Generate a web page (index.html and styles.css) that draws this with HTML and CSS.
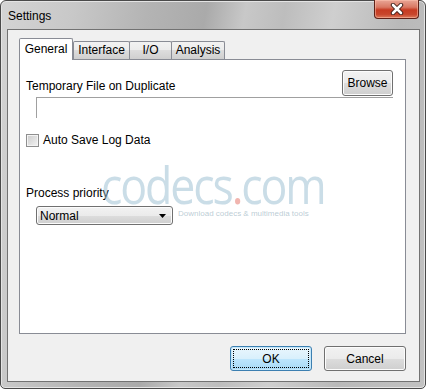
FILE: index.html
```html
<!DOCTYPE html>
<html>
<head>
<meta charset="utf-8">
<link rel="stylesheet" href="styles.css">
</head>
<body>
<div class="window">
  <div class="titlebar">
    <span class="title">Settings</span>
    <div class="close">
      <svg width="18" height="12" viewBox="0 0 18 12">
        <path d="M5 2 L13 10 M13 2 L5 10" stroke="#3a1a14" stroke-width="4.4" stroke-linecap="round" fill="none"/>
        <path d="M5 2 L13 10 M13 2 L5 10" stroke="#ffffff" stroke-width="2.6" stroke-linecap="round" fill="none"/>
      </svg>
    </div>
  </div>
  <div class="client">
    <div class="tabstrip">
      <div class="tab active w-general">General</div>
      <div class="tab w-interface">Interface</div>
      <div class="tab w-io">I/O</div>
      <div class="tab w-analysis">Analysis</div>
    </div>
    <div class="panel">
      <div class="row-file">
        <span class="label">Temporary File on Duplicate</span>
        <button class="btn browse">Browse</button>
      </div>
      <div class="edit"></div>
      <label class="check-row">
        <span class="checkbox"></span>
        <span class="label">Auto Save Log Data</span>
      </label>
      <div class="label priority-label">Process priority</div>
      <div class="combo">
        <span>Normal</span>
        <svg class="arrow" width="7" height="4" viewBox="0 0 7 4"><path d="M0 0 H7 L3.5 4 Z" fill="#000"/></svg>
      </div>
      <div class="watermark">
        <div class="wm-big">codecs<span class="wm-dot">.</span>com</div>
        <div class="wm-small">Download codecs &amp; multimedia tools</div>
      </div>
    </div>
    <div class="buttons">
      <button class="btn ok"><span class="focus">OK</span></button>
      <button class="btn cancel">Cancel</button>
    </div>
  </div>
</div>
</body>
</html>
```
FILE: styles.css
```css
html, body {
  margin: 0;
  padding: 0;
  background: #ffffff;
}
.window {
  width: 426px;
  height: 389px;
  box-sizing: border-box;
  border: 1px solid #4a4a4a;
  border-radius: 6px 6px 5px 5px;
  background: linear-gradient(100deg, #d4d4d4 0%, #c8c8c8 15%, #b4b4b4 30%, #aaaaaa 42%, #c8c8c8 50%, #bdbdbd 58%, #cfcfcf 68%, #b9b9b9 82%, #c2c2c2 100%);
  box-shadow: inset 0 0 0 1px #e4e4e4;
  padding: 0 5px 6px 6px;
  display: flex;
  flex-direction: column;
  font-family: "Liberation Sans", Arial, sans-serif;
  font-size: 12px;
  color: #000;
}
.titlebar {
  height: 28px;
  display: flex;
  justify-content: space-between;
  align-items: flex-start;
  position: relative;
}
.title {
  font-size: 12px;
  margin-left: 1px;
  margin-top: 8px;
  color: #000;
}
.close {
  width: 45px;
  height: 19px;
  margin-right: 1px;
  margin-top: -1px;
  box-sizing: border-box;
  border: 1px solid #5e2118;
  border-top: none;
  border-radius: 0 0 4px 4px;
  background: linear-gradient(#e9a696 0%, #d97863 40%, #c63b22 55%, #c8462c 80%, #dc7a5c 100%);
  box-shadow: inset 0 0 0 1px rgba(255, 200, 180, 0.5);
  display: flex;
  align-items: center;
  justify-content: center;
}
.client {
  flex: 1;
  border: 1px solid #727272;
  background: #f0f0f0;
  padding: 8px 13px 10px 11px;
  display: flex;
  flex-direction: column;
}
.tabstrip {
  display: flex;
  align-items: flex-end;
  height: 21px;
  position: relative;
  z-index: 2;
}
.tab {
  box-sizing: border-box;
  height: 18px;
  border: 1px solid #898c95;
  border-bottom: none;
  background: linear-gradient(#f2f2f2 0%, #ebebeb 50%, #dddddd 50%, #cfcfcf 100%);
  text-align: center;
  line-height: 17px;
  margin-left: -1px;
  border-radius: 2px 2px 0 0;
}
.tab:first-child {
  margin-left: 0;
}
.tab.active {
  height: 22px;
  background: #ffffff;
  margin-bottom: -1px;
  line-height: 20px;
  position: relative;
  z-index: 3;
}
.w-general { width: 54px; }
.w-interface { width: 57px; margin-left: 0; }
.w-io { width: 43px; }
.w-analysis { width: 54px; }
.panel {
  flex: 1;
  background: #ffffff;
  border: 1px solid #898c95;
  padding: 10px 12px 0 6px;
  display: flex;
  flex-direction: column;
  align-items: flex-start;
  position: relative;
}
.row-file {
  align-self: stretch;
  display: flex;
  justify-content: space-between;
  align-items: flex-end;
  height: 26px;
}
.row-file .label {
  margin-bottom: 3px;
}
.btn {
  font-family: "Liberation Sans", Arial, sans-serif;
  font-size: 12px;
  color: #000;
  box-sizing: border-box;
  border: 1px solid #707070;
  border-radius: 3px;
  background: linear-gradient(#f2f2f2 0%, #ebebeb 50%, #dddddd 50%, #cfcfcf 100%);
  box-shadow: inset 0 0 0 1px #fcfcfc;
  padding: 0;
  margin: 0;
}
.browse {
  width: 51px;
  height: 26px;
}
.edit {
  align-self: stretch;
  box-sizing: border-box;
  height: 21px;
  margin: 1px 0 0 10px;
  border-top: 1px solid #a0a0a0;
  border-left: 1px solid #a0a0a0;
}
.check-row {
  display: flex;
  align-items: center;
  margin-top: 15px;
  height: 14px;
}
.checkbox {
  width: 13px;
  height: 13px;
  box-sizing: border-box;
  border: 1px solid #8f8f8f;
  background: linear-gradient(135deg, #cbcbcb, #f4f4f4);
  box-shadow: inset 0 0 0 1px #f4f4f4;
  margin-right: 4px;
}
.priority-label {
  margin-top: 39px;
}
.combo {
  margin: 6px 0 0 10px;
  width: 137px;
  height: 19px;
  box-sizing: border-box;
  border: 1px solid #707070;
  border-radius: 3px;
  background: linear-gradient(#f2f2f2 0%, #ebebeb 50%, #dddddd 50%, #cfcfcf 100%);
  box-shadow: inset 0 0 0 1px #fcfcfc;
  display: flex;
  align-items: center;
  justify-content: space-between;
  padding: 0 6px 0 3px;
  position: relative;
  z-index: 2;
}
.arrow {
  margin-top: 1px;
}
.watermark {
  position: absolute;
  left: 81px;
  top: 104px;
  pointer-events: none;
  z-index: 1;
}
.wm-big {
  font-family: "Open Sans", "Liberation Sans", sans-serif;
  font-weight: 400;
  font-size: 52px;
  line-height: 40px;
  color: rgba(150, 188, 208, 0.5);
  letter-spacing: -2.5px;
  transform: scaleX(0.86);
  transform-origin: left center;
}
.wm-dot {
  color: rgba(230, 120, 110, 0.55);
}
.wm-small {
  font-family: "Liberation Sans", sans-serif;
  font-size: 8px;
  line-height: 10px;
  color: rgba(150, 175, 190, 0.65);
  margin: 5px 0 0 77px;
  letter-spacing: 0;
}
.buttons {
  display: flex;
  justify-content: flex-end;
  gap: 12px;
  margin-top: 12px;
}
.ok, .cancel {
  width: 82px;
  height: 25px;
}
.ok {
  border-color: #3c7fb1;
  background: linear-gradient(#eaf6fd 0%, #d9f0fc 50%, #bee6fd 50%, #a7d9f5 100%);
  box-shadow: inset 0 0 0 1px #c5e7f9;
  padding: 2px;
  display: flex;
}
.ok .focus {
  flex: 1;
  border: 1px dotted #000;
  display: flex;
  align-items: center;
  justify-content: center;
}
```
